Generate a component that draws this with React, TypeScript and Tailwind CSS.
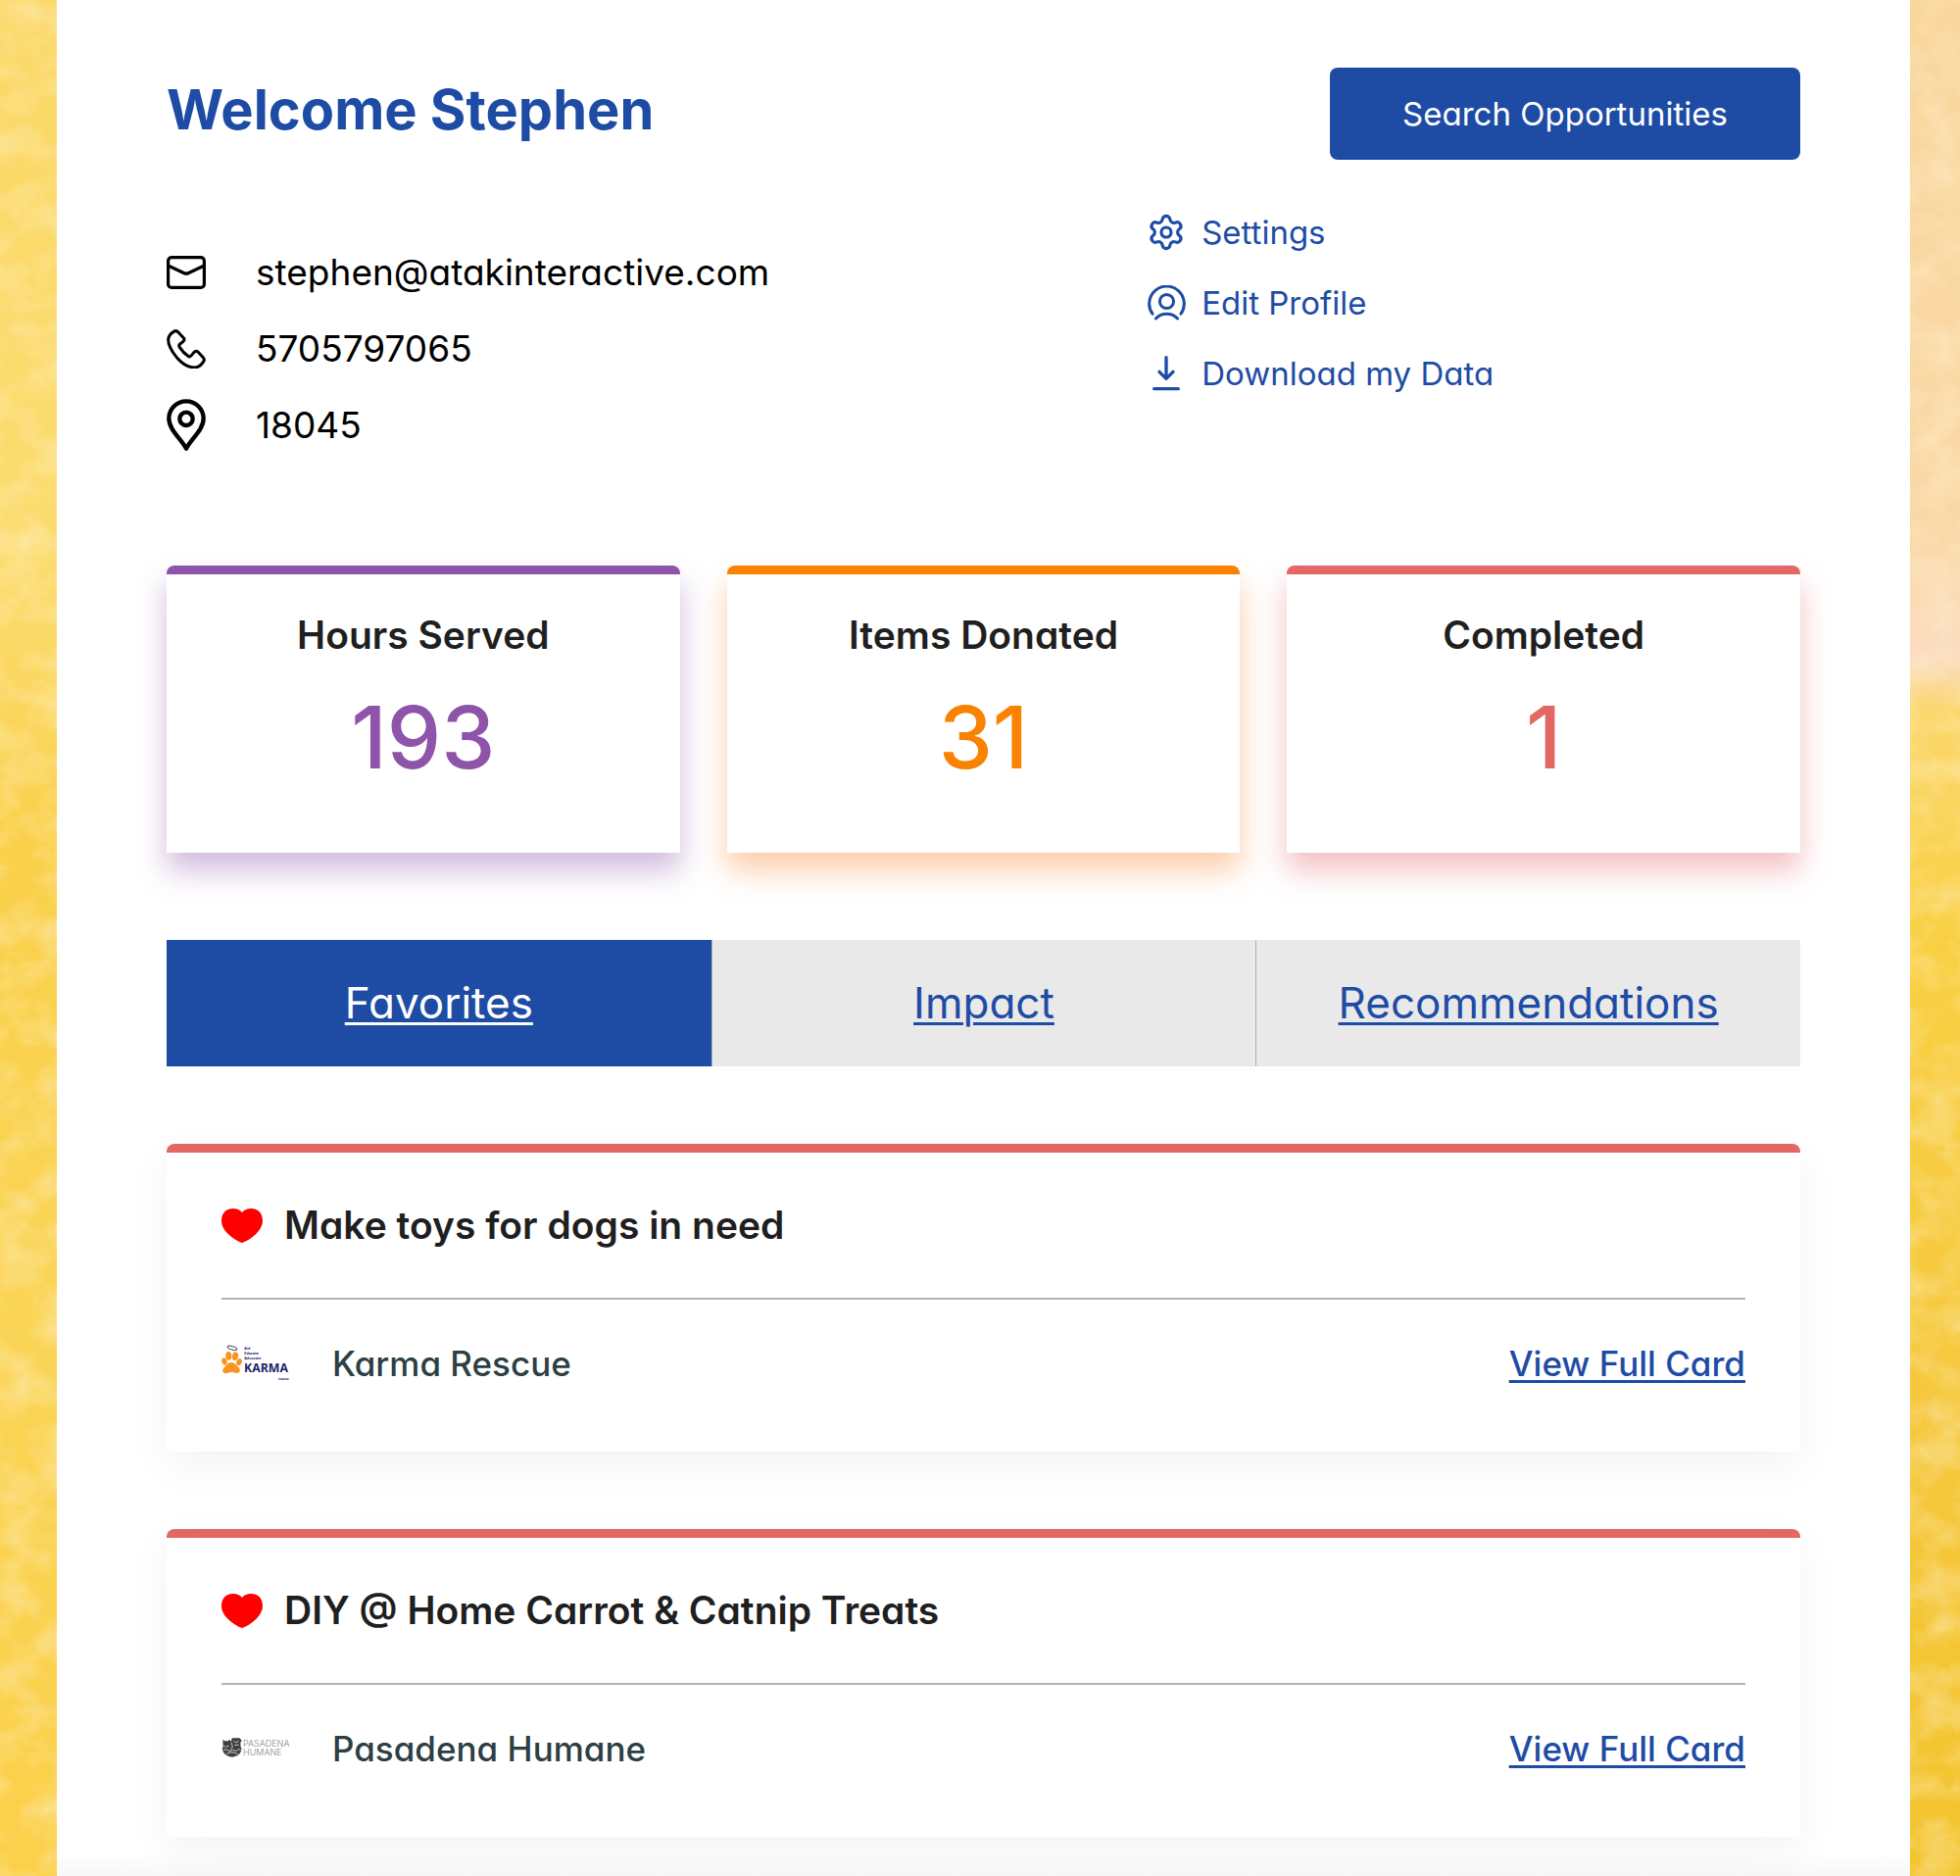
import React from "react";
import { Settings } from "lucide-react";
import { clsx } from "clsx";

interface IconProps {
  className?: string;
}

function MailIcon({ className }: IconProps) {
  return (
    <svg viewBox="0 0 40 34" fill="none" stroke="currentColor" strokeWidth="3.2" strokeLinejoin="round" className={className} aria-hidden="true">
      <rect x="1.6" y="1.6" width="36.8" height="30.8" rx="3.5" />
      <path d="M1.6 10 L17.5 17.5 Q20 18.8 22.5 17.5 L38.4 10" />
    </svg>
  );
}

function PhoneIcon({ className }: IconProps) {
  return (
    <svg viewBox="0 0 120 122" fill="none" stroke="currentColor" strokeWidth="9" strokeLinejoin="round" className={className} aria-hidden="true">
      <path d="M22 7 Q29 2 35 8 L52 26 Q57 32 50 38 L41 45 Q36 49 40 55 Q51 72 66 82 Q71 86 76 80 L84 70 Q90 64 96 69 L112 86 Q118 93 112 100 Q101 117 84 117 Q56 115 31 86 Q5 54 5 32 Q6 16 22 7Z" />
    </svg>
  );
}

function PinIcon({ className }: IconProps) {
  return (
    <svg viewBox="0 0 120 160" fill="none" stroke="currentColor" strokeWidth="13" strokeLinejoin="round" className={className} aria-hidden="true">
      <path d="M60 152 C46 124 7 94 7 60 A53 53 0 0 1 113 60 C113 94 74 124 60 152Z" />
      <circle cx="60" cy="61" r="20" />
    </svg>
  );
}

function ProfileIcon({ className }: IconProps) {
  return (
    <svg viewBox="0 0 116 108" fill="none" stroke="currentColor" strokeWidth="9" strokeLinecap="round" className={className} aria-hidden="true">
      <path d="M15 87 A53 53 0 1 1 101 87" />
      <circle cx="58" cy="49" r="21" />
      <path d="M25 101 C42 82 74 82 91 101" />
    </svg>
  );
}

function DownloadIcon({ className }: IconProps) {
  return (
    <svg viewBox="0 0 84 106" fill="none" stroke="currentColor" strokeWidth="10" strokeLinecap="round" strokeLinejoin="round" className={className} aria-hidden="true">
      <path d="M42 5 V70 M21 49 L42 70 L63 49 M5 101 H79" />
    </svg>
  );
}

function HeartIcon({ className }: IconProps) {
  return (
    <svg viewBox="0 0 42 35" fill="currentColor" className={className} aria-hidden="true">
      <path d="M21 35 C15 33 0 24 0 12.5 C0 4 5.5 0 11.5 0 C16 0 19 1.5 21 4 C23 1.5 26 0 30.5 0 C36.5 0 42 4 42 12.5 C42 24 27 33 21 35Z" />
    </svg>
  );
}

function KarmaLogo({ className }: IconProps) {
  return (
    <svg viewBox="48 60 210 126" className={className} role="img" aria-label="Karma Rescue logo">
      <g fill="#f7941d">
        <ellipse cx="57" cy="117" rx="8" ry="11" transform="rotate(-20 57 117)" />
        <ellipse cx="70" cy="100" rx="9" ry="13" transform="rotate(-6 70 100)" />
        <ellipse cx="90" cy="101" rx="9" ry="13" transform="rotate(10 90 101)" />
        <ellipse cx="102" cy="119" rx="8" ry="11" transform="rotate(24 102 119)" />
        <path d="M78 120 C89 119 94 130 101 136 C109 145 102 156 91 152 C82 149 74 149 65 153 C54 156 47 146 55 137 C62 131 67 120 78 120Z" />
      </g>
      <ellipse cx="81" cy="76" rx="15" ry="5" fill="none" stroke="#4a4f66" strokeWidth="3" transform="rotate(16 81 76)" />
      <g fill="#1b2465" fontFamily="'Open Sans', sans-serif" fontWeight="700">
        <text x="118" y="81" fontSize="11">Aid</text>
        <text x="118" y="96" fontSize="11">Educate</text>
        <text x="118" y="111" fontSize="11">Advocate</text>
        <text x="117" y="151" fontSize="37">KARMA</text>
        <text x="254" y="173" fontSize="10" textAnchor="end">rescue</text>
      </g>
    </svg>
  );
}

function PasadenaLogo({ className }: IconProps) {
  return (
    <svg viewBox="48 39 210 126" className={className} role="img" aria-label="Pasadena Humane logo">
      <path fill="#3f3f3f" d="M52 74 L58 79 H68 L74 74 L78 82 L80 70 H104 L110 78 L106 84 L107 98 L110 102 Q108 124 82 128 Q56 126 50 104 L53 96Z" />
      <g fill="none" stroke="#c9c9c9" strokeWidth="3">
        <path d="M55 93 L62 97 L71 93 M78 84 L82 97 L76 104 M86 79 L93 84 L101 78 M88 91 H101" />
        <path d="M53 107 Q64 100 72 110 Q84 101 92 110 Q100 101 108 106 M64 118 Q80 108 98 119" />
      </g>
      <g fill="#858585" fontFamily="Inter, sans-serif" fontWeight="300" fontSize="27">
        <text x="114" y="97">PASADENA</text>
        <text x="114" y="124">HUMANE</text>
      </g>
    </svg>
  );
}

// Mottled watercolour paper behind the page
function PaperTexture() {
  return (
    <svg className="absolute inset-0 h-full w-full" aria-hidden="true">
      <filter id="paper" x="0" y="0" width="100%" height="100%">
        <feTurbulence type="fractalNoise" baseFrequency="0.025 0.03" numOctaves="4" seed="8" />
        <feColorMatrix values="0 0 0 0 1  0 0 0 0 0.89  0 0 0 0 0.64  0.9 0 0 0 -0.35" />
      </filter>
      <rect width="100%" height="100%" filter="url(#paper)" />
    </svg>
  );
}

const contacts = [
  { text: "stephen@atakinteractive.com", icon: MailIcon },
  { text: "5705797065", icon: PhoneIcon },
  { text: "18045", icon: PinIcon },
];

const stats = [
  { label: "Hours Served", value: 193, border: "border-[#8e54a9]", text: "text-[#8e54a9]", shadow: "shadow-[0_18px_30px_rgba(142,84,169,0.4)]" },
  { label: "Items Donated", value: 31, border: "border-[#f98200]", text: "text-[#f98200]", shadow: "shadow-[0_18px_30px_rgba(249,130,40,0.4)]" },
  { label: "Completed", value: 1, border: "border-[#e36863]", text: "text-[#e36863]", shadow: "shadow-[0_18px_30px_rgba(227,90,99,0.38)]" },
];

const tabs = ["Favorites", "Impact", "Recommendations"];

const favorites = [
  { title: "Make toys for dogs in need", org: "Karma Rescue", logo: KarmaLogo },
  { title: "DIY @ Home Carrot & Catnip Treats", org: "Pasadena Humane", logo: PasadenaLogo },
];

export default function App() {
  return (
    <div className="relative min-h-screen bg-[#fad55c] pr-[51px] pl-[58px] font-[Inter,sans-serif] [font-feature-settings:'cv11']">
      <div className="absolute inset-y-0 left-0 w-[58px] bg-[linear-gradient(#fbd866_0%,#fcdc70_30%,#fad04a_45%,#fad455_70%,#fbd04a_100%)]" />
      <div className="absolute inset-y-0 right-0 w-[51px] bg-[linear-gradient(#f9d69c_0%,#fad8a6_28%,#fbdcc0_35%,#fbd76c_38%,#f9d044_50%,#f5c83e_75%,#f3c42e_100%)]" />
      <PaperTexture />

      <main className="relative min-h-screen bg-white px-28 pt-[69px]">
        <header className="flex items-start justify-between">
          <h1 className="text-[56px] leading-[86px] font-bold text-[#1e4ca5]">Welcome Stephen</h1>
          <button type="button" className="h-[94px] w-[480px] rounded-lg bg-[#1e4ca5] text-[33px] leading-[48px] text-white">
            Search Opportunities
          </button>
        </header>

        <section className="mt-[50px] grid grid-cols-[3fr_2fr]">
          <ul className="flex flex-col gap-6 pt-[38px]">
            {contacts.map((c) => (
              <li key={c.text} className="flex h-[54px] items-center gap-[51px] text-[37px] leading-[54px] text-black">
                <c.icon className="w-10 shrink-0" />
                {c.text}
              </li>
            ))}
          </ul>
          <nav className="flex flex-col items-start gap-6 text-[33px] leading-[48px] text-[#1e4ca5]">
            <a href="#settings" className="flex items-center gap-4">
              <Settings className="h-10 w-10" strokeWidth={1.9} />
              Settings
            </a>
            <a href="#profile" className="flex items-center gap-4">
              <span className="flex w-10 justify-center">
                <ProfileIcon className="w-[39px]" />
              </span>
              Edit Profile
            </a>
            <a href="#download" className="flex items-center gap-4">
              <span className="flex w-10 justify-center">
                <DownloadIcon className="w-7" />
              </span>
              Download my Data
            </a>
          </nav>
        </section>

        <section className="mt-[116px] grid grid-cols-3 gap-12">
          {stats.map((s) => (
            <div key={s.label} className={clsx("rounded-t-lg border-t-[9px] bg-white pt-[38px] pb-[70px] text-center", s.border, s.shadow)}>
              <h2 className="text-[39px] leading-[48px] font-semibold text-[#1f1f1f]">{s.label}</h2>
              <p className={clsx("mt-8 text-[88px] leading-[96px] font-medium", s.text)}>{s.value}</p>
            </div>
          ))}
        </section>

        <nav className="mt-[89px] grid grid-cols-3">
          {tabs.map((t, i) => (
            <a
              key={t}
              href={`#${t.toLowerCase()}`}
              className={clsx(
                "py-9 text-center text-[44px] leading-[57px] underline decoration-[3px] underline-offset-[4px]",
                i === 0 ? "bg-[#1e4ca5] text-white" : "border-l border-[#b0b0b0] bg-[#e9e9e9] text-[#1e4ca5]"
              )}
            >
              {t}
            </a>
          ))}
        </nav>

        <section className="mt-[79px] flex flex-col gap-[79px]">
          {favorites.map((f) => (
            <article key={f.title} className="rounded-t-lg border-t-[9px] border-[#e36863] bg-white px-14 pt-[50px] pb-[66px] shadow-[0_14px_44px_rgba(0,0,0,0.05)]">
              <div className="flex items-center gap-[22px] border-b-2 border-[#b3b3b3] pb-[50px]">
                <HeartIcon className="w-[42px] text-[#ff0000]" />
                <h3 className="text-[39px] leading-[48px] font-semibold text-[#1f1f1f]">{f.title}</h3>
              </div>
              <div className="mt-[41px] flex items-center text-[35px] leading-[48px]">
                <f.logo className="mr-[43px] w-[70px]" />
                <span className="font-medium text-[#2d3f45]">{f.org}</span>
                <a href="#card" className="ml-auto font-medium text-[#1e4ca5] underline decoration-[3px] underline-offset-[4px]">
                  View Full Card
                </a>
              </div>
            </article>
          ))}
        </section>
        <div className="-mx-28 mt-4 h-6 bg-linear-to-b from-transparent to-black/3" />
      </main>
    </div>
  );
}
